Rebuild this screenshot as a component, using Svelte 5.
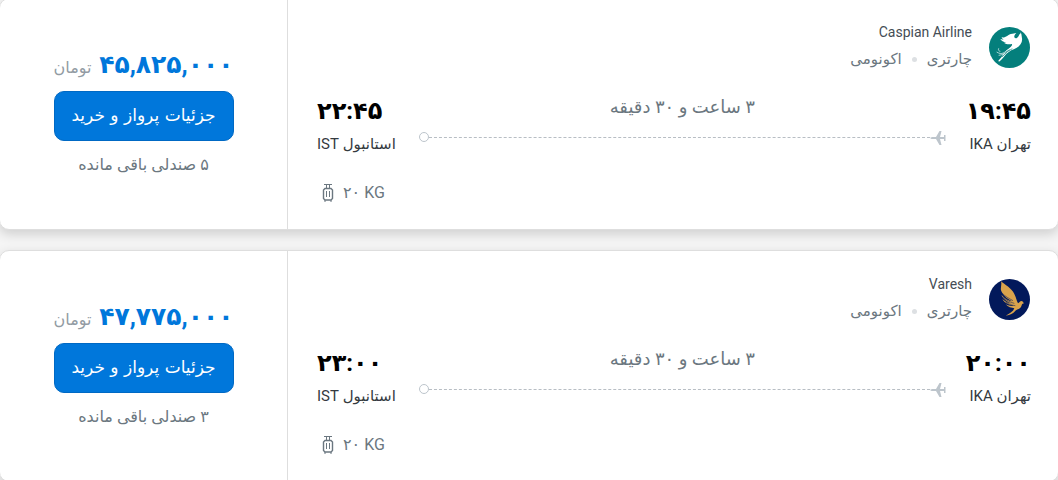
<script lang="ts">
  const flights = [
    {
      airline: 'Caspian Airline', logo: 'caspian', price: '۴۵,۸۲۵,۰۰۰', seats: '۵',
      departure: '۱۹:۴۵', arrival: '۲۲:۴۵'
    },
    {
      airline: 'Varesh', logo: 'varesh', price: '۴۷,۷۷۵,۰۰۰', seats: '۳',
      departure: '۲۰:۰۰', arrival: '۲۳:۰۰'
    }
  ];
</script>

<main class="list" dir="rtl" lang="fa">
  {#each flights as flight}
    <article class="card">
      <section class="details">
        <header class="carrier">
          {#if flight.logo === 'caspian'}
            <svg class="logo" viewBox="0 0 123 123" aria-hidden="true">
              <circle cx="61.500" cy="61.500" r="61.500" fill="#047f7c" />
              <path fill="#fff" d="M99 34C101 46 93 60 76 66C63 71 54 77 46 88C40 95 35 101 30 104L28 101C35 94 38 89 42 83C49 72 57 67 64 61C68 57 70 54 69 51C60 53 51 52 45 47L52 46C43 45 37 41 34 36L44 38C38 34 38 32 38 31C50 34 55 22 70 20C77 19 80 18 82 18C78 22 75 26 76 31C80 37 86 32 89 27C90 23 92 21 94 20L95 16L97 21C98 25 98 29 99 34Z" />
              <path fill="none" stroke="#fff" stroke-width="2" d="M29 64C27 69 29 72 34 73M23 75C30 79 36 82 45 77L61 66M29 85C39 84 47 80 54 73" />
              <path fill="none" stroke="#047f7c" stroke-width="2" d="M39 90L55 74L70 65M46 78L62 68" />
            </svg>
          {:else}
            <svg class="logo" viewBox="0 0 123 123" aria-hidden="true">
              <circle cx="61.500" cy="61.500" r="61.500" fill="#02195b" />
              <path fill="#d9a34c" d="M36 7C47 17 68 27 76 45C82 57 83 66 87 73C91 71 92 66 98 66C101 67 102 69 105 73C98 74 99 79 96 84C91 92 83 90 78 97C73 103 64 109 50 110C62 104 73 97 76 88C68 87 57 84 50 76C60 81 68 82 74 80C60 78 47 72 40 60C50 69 62 74 70 74C57 70 43 61 37 47C47 59 60 66 69 67C54 59 41 49 36 34C34 24 39 18 36 7Z" />
              <path fill="none" stroke="#02195b" stroke-width="1.500" d="M38 41C49 53 60 58 72 65M43 55C54 66 65 70 76 73M50 69C60 76 70 79 79 80" />
            </svg>
          {/if}
          <div class="names">
            <h2 class="airline"><bdi>{flight.airline}</bdi></h2>
            <p class="tags"><span>چارتری</span><i class="dot"></i><span>اکونومی</span></p>
          </div>
        </header>

        <div class="route">
          <div class="stop">
            <time class="clock" dir="ltr">{flight.departure}</time>
            <span class="city">تهران IKA</span>
          </div>
          <div class="path">
            <span class="duration">۳ ساعت و ۳۰ دقیقه</span>
            <div class="track">
              <svg class="plane" viewBox="0 0 16 16" aria-hidden="true">
                <path fill="#bdc5cc" d="M0 9C1 8 2 8 3 8H6L9.500 2H11.500L10 8H14V6H15.500V12H14V10H10L11.500 16H9.500L6 10H3C2 10 1 10 0 9Z" />
              </svg>
              <span class="dash"></span>
              <span class="ring"></span>
            </div>
          </div>
          <div class="stop end">
            <time class="clock" dir="ltr">{flight.arrival}</time>
            <span class="city">استانبول IST</span>
          </div>
        </div>

        <footer class="luggage" dir="ltr">
          <svg class="bag" viewBox="0 0 12 20" fill="none" stroke="#6b7780" aria-hidden="true">
            <path d="M2 1.500H10M4.500 2V5M7.500 2V5M3 17V19M9 17V19M4.500 8V14M7.500 8V14" />
            <path stroke-width="1.400" d="M3 5.500H9L10.500 7V15.500L9 17H3L1.500 15.500V7Z" />
          </svg>
          <span>۲۰ KG</span>
        </footer>
      </section>

      <aside class="offer">
        <div class="box">
          <p class="price"><strong>{flight.price}</strong><span>تومان</span></p>
          <button class="buy" type="button">جزئیات پرواز و خرید</button>
          <p class="seats">{flight.seats} صندلی باقی مانده</p>
        </div>
      </aside>
    </article>
  {/each}
</main>

<style>
  :global(body) {
    background: #f5f5f5;
    overflow: hidden;
  }
  .list {
    display: flex;
    flex-direction: column;
    gap: 20px;
    margin: -2px -1px 0;
    font-family: Roboto, "DejaVu Sans", sans-serif;
    font-size: 16px;
    line-height: 24px;
    color: #6b7780;
  }
  .card {
    display: flex;
    border: 1px solid #dedede;
    border-radius: 10px;
    background: #fff;
    box-shadow: 0 4px 12px rgba(0, 0, 0, 0.16);
  }
  h2, p { margin: 0; }
  .details {
    flex: 1;
    min-width: 0;
    padding: 21px 27px 24px 29px;
  }
  .carrier {
    display: flex;
    align-items: center;
    gap: 17px;
    padding-right: 1px;
  }
  .logo {
    width: 41px;
    height: 41px;
    flex: none;
  }
  .airline {
    font-size: 14px;
    font-weight: 400;
    line-height: 24px;
    color: #454d55;
  }
  .tags {
    display: flex;
    align-items: center;
    gap: 10px;
    font-size: 15px;
    line-height: 30px;
  }
  .dot {
    width: 5px;
    height: 5px;
    border-radius: 50%;
    background: #dde0e3;
  }
  .route {
    display: flex;
    gap: 20px;
    margin-top: 18px;
  }
  .stop {
    display: flex;
    flex-direction: column;
    white-space: nowrap;
  }
  .end {
    align-items: flex-end;
    min-width: 82px;
  }
  .clock {
    font-size: 24px;
    font-weight: 700;
    line-height: 38px;
    color: #000;
  }
  .stop:not(.end) .clock { align-self: flex-start; }
  .city {
    font-size: 15px;
    line-height: 28px;
    color: #343a40;
  }
  .path {
    flex: 1;
    display: flex;
    flex-direction: column;
    text-align: center;
  }
  .duration {
    font-size: 18px;
    line-height: 30px;
  }
  .track {
    display: flex;
    align-items: center;
    height: 24px;
    margin-top: 3px;
  }
  .plane {
    width: 16px;
    height: 16px;
  }
  .dash {
    flex: 1;
    border-top: 1px dashed #b8bec4;
  }
  .ring {
    width: 8px;
    height: 8px;
    border: 1px solid #bdc5cc;
    border-radius: 50%;
  }
  .luggage {
    display: flex;
    align-items: center;
    gap: 9px;
    margin-top: 23px;
    padding-left: 5px;
  }
  .bag {
    width: 12px;
    height: 20px;
  }
  .offer {
    flex: none;
    width: 287px;
    border-right: 1px solid #dedede;
    display: flex;
    align-items: center;
    justify-content: center;
  }
  .box {
    width: 180px;
    padding-bottom: 4px;
    text-align: center;
  }
  .price {
    display: flex;
    align-items: baseline;
    justify-content: space-between;
    white-space: nowrap;
    line-height: 40px;
    font-size: 16px;
    color: #929ba3;
  }
  .price strong {
    font-size: 25px;
    color: #0077db;
  }
  .buy {
    display: block;
    width: 100%;
    height: 50px;
    margin: 3px 0 9px;
    padding: 0 0 2px;
    border: 1px solid #0069c4;
    border-radius: 10px;
    background: #0077db;
    color: #fff;
    font: 500 17px "DejaVu Sans", sans-serif;
    white-space: nowrap;
  }
  .seats {
    font-size: 16px;
    line-height: 30px;
  }
</style>
